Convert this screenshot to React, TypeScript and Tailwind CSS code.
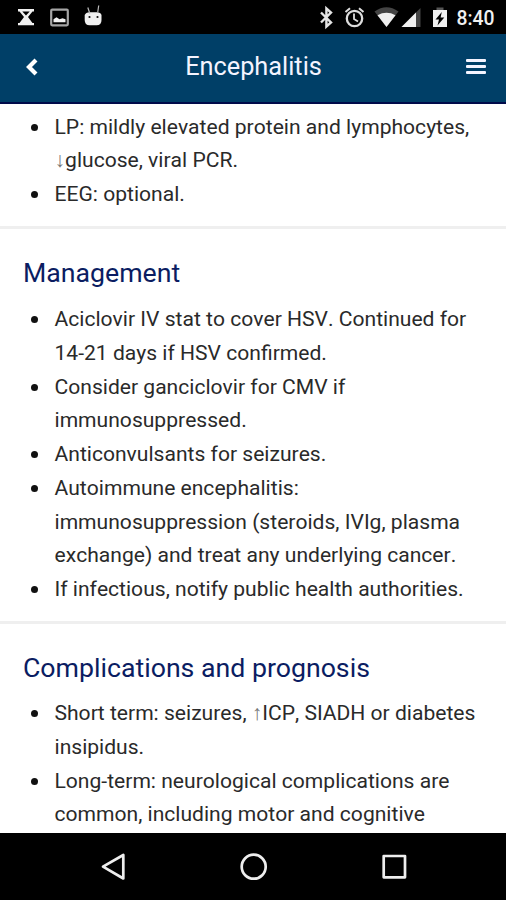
import React from "react";

function StatusBar() {
  return (
    <div className="h-[34px] shrink-0 bg-black">
      <svg width="506" height="34" viewBox="0 0 506 34" fill="#f0f0f0">
        <path d="M18 9h16v2.500h-1.500L28 17l4.500 6H34v2.300H18V23h1.500l4.500-6-4.500-5.500H18z" />
        <path d="M22.300 11.500h7.400l-3.700 4z" fill="#000" />
        <rect x="51.200" y="9.700" width="16.600" height="15.600" rx="1" fill="none" stroke="#a5a5a5" strokeWidth="2.200" />
        <path d="M53.500 22.300v-3l3-2 3 2 3-1 3 1v3z" />
        <path d="M84.700 15q1-2.500 5-2.800h7q4 0 4.800 2.800v5q0 5.300-5 5.300h-6.800q-5 0-5-5.300z" />
        <path d="M87.800 7.500l2 6M98.700 5.500l-1 7" stroke="#bbb" strokeWidth="1.200" />
        <circle cx="89.500" cy="17" r="1.100" fill="#111" />
        <circle cx="97.500" cy="17" r="1.100" fill="#111" />
        <path d="M321 12.500l10 10-4.600 4V8.500l4.600 4-10 10" fill="none" stroke="#e4e4e4" strokeWidth="2.400" />
        <circle cx="354.500" cy="18.500" r="7.700" fill="none" stroke="#ddd" strokeWidth="2.300" />
        <path d="M354 13.500v5.500l4 2.500" fill="none" stroke="#ddd" strokeWidth="1.800" />
        <path d="M345.500 12l4.500-3.800M363.500 12l-4.500-3.800" stroke="#ddd" strokeWidth="2" />
        <path d="M374.500 11.500q12-8.500 24 0L386.500 27z" fill="#444" />
        <path d="M377.500 15.200q9-4.800 18 0L386.500 27z" />
        <path d="M420.500 8v19H401.500z" fill="#444" />
        <path d="M416 12.500V27H401.500z" />
        <path d="M433 10h14v17h-14z" />
        <path d="M436.500 7.500h7V10h-7z" fill="#555" />
        <path d="M441.800 12l-6.300 7.500h3.500l-1.500 6 6.800-8h-3.700z" fill="#000" />
        <text x="456.500" y="25" fontFamily="Roboto, sans-serif" fontWeight="500" fontSize="19.500" textLength="38" lengthAdjust="spacingAndGlyphs">8:40</text>
      </svg>
    </div>
  );
}

function Header() {
  return (
    <header className="flex h-[70px] shrink-0 items-center border-b-2 border-[#000b4a] bg-[#003f67] pb-[3px]">
      <svg className="ml-[25px]" width="14" height="18" viewBox="0 0 14 18">
        <path d="M11 2L4 9l7 7" fill="none" stroke="#fff" strokeWidth="4.200" />
      </svg>
      <h1 className="flex-1 pl-[2px] text-center text-[25.300px] leading-[34px] text-[#f4f4ff]">Encephalitis</h1>
      <div className="mr-[20px] flex w-5 flex-col gap-[3px]">
        <div className="h-[3px] rounded-[1px] bg-[#f4f4ff]" />
        <div className="h-[3px] rounded-[1px] bg-[#f4f4ff]" />
        <div className="h-[3px] rounded-[1px] bg-[#f4f4ff]" />
      </div>
    </header>
  );
}

function Line({ text }: { text: string }) {
  return (
    <div className="whitespace-nowrap">
      {text.split(/([↓↑])/).map((part, i) =>
        part === "↓" || part === "↑" ? (
          <span key={i} className="text-[#777]">{part}</span>
        ) : (
          part
        ),
      )}
    </div>
  );
}

function Item({ lines }: { lines: string[] }) {
  return (
    <li className="flex">
      <span className="ml-[31px] mr-[16px] mt-[14px] size-[7px] shrink-0 rounded-full bg-[#111]" />
      <div className="pl-[0.500px]">
        {lines.map((line) => (
          <Line key={line} text={line} />
        ))}
      </div>
    </li>
  );
}

const results = [["LP: mildly elevated protein and lymphocytes,", "↓glucose, viral PCR."], ["EEG: optional."]];
const management = [
  ["Aciclovir IV stat to cover HSV. Continued for", "14-21 days if HSV confirmed."],
  ["Consider ganciclovir for CMV if", "immunosuppressed."],
  ["Anticonvulsants for seizures."],
  ["Autoimmune encephalitis:", "immunosuppression (steroids, IVIg, plasma", "exchange) and treat any underlying cancer."],
  ["If infectious, notify public health authorities."],
];
const complications = [
  ["Short term: seizures, ↑ICP, SIADH or diabetes", "insipidus."],
  ["Long-term: neurological complications are", "common, including motor and cognitive"],
];

function List({ items }: { items: string[][] }) {
  return (
    <ul className="text-[21.094px] leading-[33.750px] text-[#2a2a2a] [font-kerning:none]">
      {items.map((lines) => (
        <Item key={lines[0]} lines={lines} />
      ))}
    </ul>
  );
}

function Heading({ children }: { children: React.ReactNode }) {
  return <h2 className="ml-[23px] pt-[26px] text-[26.700px] leading-[36px] text-[#0b1d62]">{children}</h2>;
}

function NavBar() {
  return (
    <nav className="h-[67px] shrink-0 bg-black">
      <svg width="506" height="67" viewBox="0 0 506 67" fill="none" stroke="#eee" strokeWidth="2.700" strokeLinejoin="round">
        <path d="M123.300 22v23.500L103 33.700z" />
        <circle cx="253.700" cy="33.700" r="12" />
        <rect x="383.700" y="23" width="21.300" height="21.300" />
      </svg>
    </nav>
  );
}

export default function App() {
  return (
    <div className="flex h-[900px] w-[506px] flex-col overflow-hidden bg-white font-['Roboto',sans-serif]">
      <StatusBar />
      <Header />
      <main className="min-h-0 flex-1 overflow-hidden">
        <section className="h-[125px] border-b-[3px] border-[#efefef] pt-[5.500px]">
          <List items={results} />
        </section>
        <section className="h-[395px] border-b-[3px] border-[#efefef]">
          <Heading>Management</Heading>
          <div className="pt-[11px]"><List items={management} /></div>
        </section>
        <section>
          <Heading>Complications and prognosis</Heading>
          <div className="pt-[10px]"><List items={complications} /></div>
        </section>
      </main>
      <NavBar />
    </div>
  );
}
